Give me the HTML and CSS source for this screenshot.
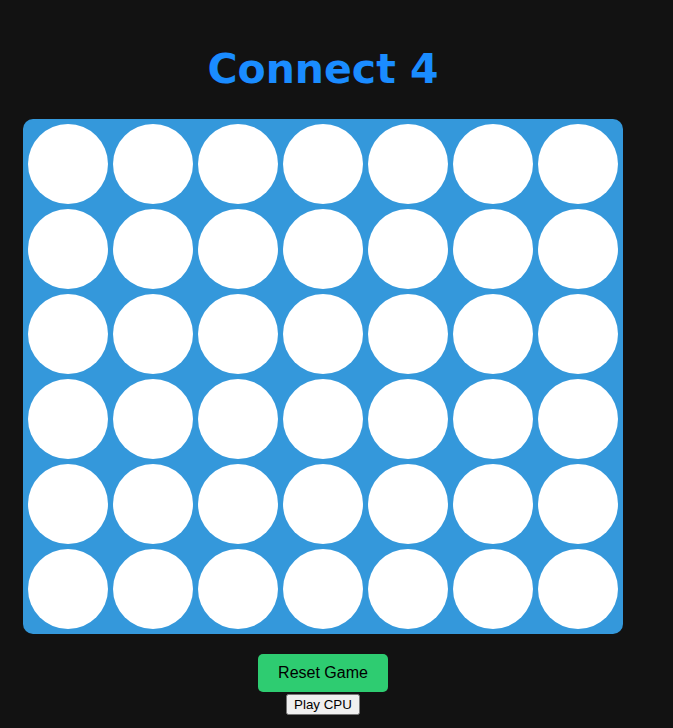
FILE: index.html
```html
<!DOCTYPE html>
<html>
<head>
<meta charset="utf-8">
<link rel="stylesheet" href="styles.css">
</head>
<body>
<div class="app">
  <h1 class="title">Connect 4</h1>
  <div class="board">
    <div class="cell"></div><div class="cell"></div><div class="cell"></div><div class="cell"></div><div class="cell"></div><div class="cell"></div><div class="cell"></div>
    <div class="cell"></div><div class="cell"></div><div class="cell"></div><div class="cell"></div><div class="cell"></div><div class="cell"></div><div class="cell"></div>
    <div class="cell"></div><div class="cell"></div><div class="cell"></div><div class="cell"></div><div class="cell"></div><div class="cell"></div><div class="cell"></div>
    <div class="cell"></div><div class="cell"></div><div class="cell"></div><div class="cell"></div><div class="cell"></div><div class="cell"></div><div class="cell"></div>
    <div class="cell"></div><div class="cell"></div><div class="cell"></div><div class="cell"></div><div class="cell"></div><div class="cell"></div><div class="cell"></div>
    <div class="cell"></div><div class="cell"></div><div class="cell"></div><div class="cell"></div><div class="cell"></div><div class="cell"></div><div class="cell"></div>
  </div>
  <button class="reset">Reset Game</button>
  <button class="cpu">Play CPU</button>
</div>
</body>
</html>
```
FILE: styles.css
```css
html, body {
  margin: 0;
  padding: 0;
  background: #121212;
}
.app {
  width: 646px;
  display: flex;
  flex-direction: column;
  align-items: center;
  padding-top: 39px;
}
.title {
  margin: 0 0 20px 0;
  height: 60px;
  line-height: 60px;
  font-family: "Comic Sans MS", "DejaVu Sans", sans-serif;
  font-weight: bold;
  font-size: 41px;
  color: #1a8cff;
}
.board {
  width: 600px;
  box-sizing: border-box;
  padding: 5px;
  background: #3498db;
  border-radius: 10px;
  display: grid;
  grid-template-columns: repeat(7, 80px);
  grid-auto-rows: 80px;
  gap: 5px;
}
.cell {
  width: 80px;
  height: 80px;
  border-radius: 50%;
  background: #ffffff;
}
.reset {
  margin-top: 20px;
  padding: 10px 20px;
  font-family: "Liberation Sans", Arial, sans-serif;
  font-size: 16px;
  color: #000;
  background: #2ecc71;
  border: none;
  border-radius: 5px;
}
.cpu {
  margin-top: 2px;
  font-family: "Liberation Sans", Arial, sans-serif;
  font-size: 13.333px;
}
```
